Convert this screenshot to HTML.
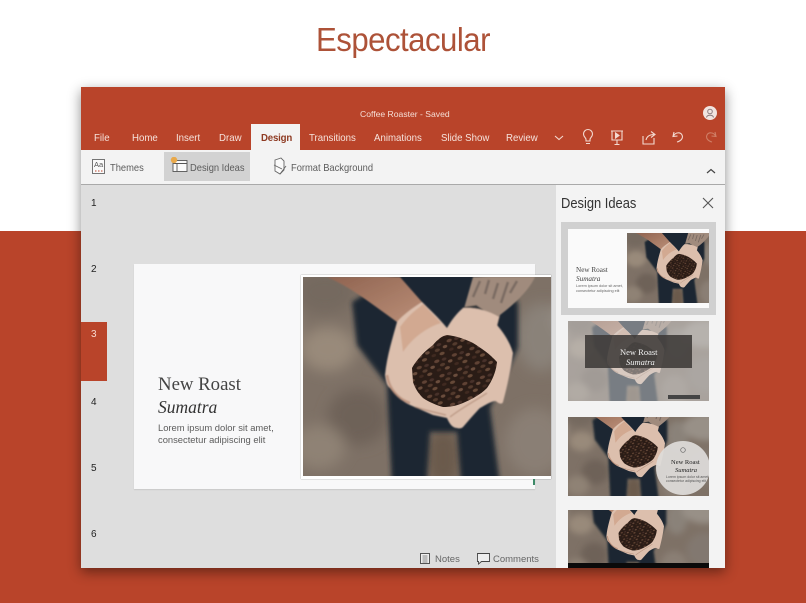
<!DOCTYPE html>
<html><head><meta charset="utf-8">
<style>
*{margin:0;padding:0;box-sizing:border-box}
html,body{width:806px;height:603px;overflow:hidden;background:#fff}
body{position:relative;font-family:"Liberation Sans",sans-serif}
.a{position:absolute;white-space:nowrap}
.sx{transform:scaleX(.89);transform-origin:left center}
.tab{position:absolute;top:131.500px;font-size:10.500px;color:#f6e3dc;line-height:13px;white-space:nowrap;transform:scaleX(.92);transform-origin:left center}
.tb{position:absolute;top:161.500px;font-size:10.500px;color:#5c5c5c;line-height:13px;white-space:nowrap;transform:scaleX(.89);transform-origin:left center}
.n{position:absolute;left:91px;font-size:10px;color:#222;line-height:12px}
svg{position:absolute;overflow:hidden}
.serif{font-family:"Liberation Serif",serif}
</style></head><body>
<div class="a" style="left:0;top:231px;width:806px;height:372px;background:#b9442a"></div>
<div class="a" style="left:316px;top:21px;font-size:33.500px;line-height:40px;color:#ad5238;letter-spacing:-.55px;transform:scaleX(.93);transform-origin:left center">Espectacular</div>

<div class="a" style="left:81px;top:87px;width:644px;height:481px;background:#dedede;box-shadow:0 4px 12px rgba(0,0,0,.45)"></div>
<div class="a" style="left:81px;top:87px;width:644px;height:63px;background:#b9442a"></div>
<div class="a" style="left:360px;top:108px;font-size:8.600px;line-height:12px;color:#f5ddd5">Coffee Roaster - Saved</div>
<div class="a" style="left:251px;top:124px;width:49px;height:27px;background:#f3f3f3"></div>
<div class="tab" style="left:94px">File</div>
<div class="tab" style="left:132px">Home</div>
<div class="tab" style="left:176px">Insert</div>
<div class="tab" style="left:219px">Draw</div>
<div class="tab" style="left:261px;color:#8e3a22;font-weight:bold;letter-spacing:-.2px">Design</div>
<div class="tab" style="left:309px">Transitions</div>
<div class="tab" style="left:374px">Animations</div>
<div class="tab" style="left:441px">Slide Show</div>
<div class="tab" style="left:506px">Review</div>

<svg style="left:550px;top:125px" width="170" height="24" viewBox="0 0 170 24" fill="none" stroke="#f3d9d0" stroke-width="1.100">
<path d="M5 11l4 3.500 4-3.500"/>
<path d="M36 16v-1.500c0-2-2.500-2.500-2.500-5.500a4.500 4.500 0 0 1 9 0c0 3-2.500 3.500-2.500 5.500V16zM36 18.500h4"/>
<path d="M61 6h12M62 6v9h10V6M67 15v4M64.500 19.500h5"/><path d="M65.500 8l3.500 2.500-3.500 2.500z" fill="#f3d9d0"/>
<path d="M93 11v8h11v-6M96 15c1-4 4-5.500 8-5.500M101 6.500l4 3-4 3"/>
<path d="M124 7l-1 4.500 4.500-.5M123.500 11c2-4 7-4 8.500-1 1.500 3-1 6-5 7"/>
<path d="M165 7l1 4.500-4.500-.5M165.500 11c-2-4-7-4-8.500-1-1.500 3 1 6 5 7" stroke="#cf7e66"/>
</svg>
<svg style="left:702px;top:105px" width="16" height="16" viewBox="0 0 16 16">
<circle cx="8" cy="8" r="7" fill="#f1e4e0"/><circle cx="8" cy="6.500" r="2.300" fill="none" stroke="#8d7d80"/><path d="M4.500 12.500c.5-3 6.500-3 7 0" fill="none" stroke="#8d7d80"/>
</svg>

<div class="a" style="left:81px;top:150px;width:644px;height:35px;background:#f3f3f3;border-bottom:1px solid #a9a9a9"></div>
<div class="a" style="left:164px;top:152px;width:86px;height:29px;background:#d2d2d2"></div>
<svg style="left:90px;top:157px" width="300" height="20" viewBox="0 0 300 20" fill="none" stroke="#666" stroke-width=".9">
<rect x="2.500" y="2.500" width="12" height="14" fill="#fafafa"/>
<text x="4" y="10" font-size="7.500" fill="#555" stroke="none" font-family="Liberation Sans">Aa</text>
<path d="M5 14h1.500M8 14h1.500M11 14h1.500" stroke="#b9442a"/>
<rect x="83" y="3.500" width="14" height="11" fill="#fafafa" stroke="#555"/><path d="M83 6.500h14M87 6.500v8" stroke="#555"/>
<circle cx="84" cy="3" r="3.200" fill="#e9a94b" stroke="none"/>
<path d="M185 3l6-2 3 3v9l-4 4-5-3z" fill="#fafafa"/><path d="M184 8l8 4M190 17l6-8"/>
</svg>
<div class="tb" style="left:110px">Themes</div>
<div class="tb" style="left:190px">Design Ideas</div>
<div class="tb" style="left:291px">Format Background</div>
<svg style="left:705px;top:167px" width="12" height="8" viewBox="0 0 12 8" fill="none" stroke="#444" stroke-width="1.200"><path d="M2 6l4-3.500L10 6"/></svg>

<div class="a" style="left:81px;top:322px;width:26px;height:59px;background:#b9442a"></div>
<div class="n" style="top:197.500px">1</div>
<div class="n" style="top:263.500px">2</div>
<div class="n" style="top:329px;color:#f8d9cf">3</div>
<div class="n" style="top:396.500px">4</div>
<div class="n" style="top:462.500px">5</div>
<div class="n" style="top:528.500px">6</div>

<div class="a" style="left:134px;top:264px;width:401px;height:225px;background:#f8f8f9;box-shadow:0 1px 1px rgba(0,0,0,.1)"></div>
<div class="a serif" style="left:158px;top:373.500px;font-size:18.800px;line-height:22px;color:#444">New Roast</div>
<div class="a serif" style="left:158px;top:396px;font-size:17.500px;line-height:22px;color:#333;font-style:italic">Sumatra</div>
<div class="a" style="left:158px;top:422px;font-size:9.400px;line-height:11.500px;color:#5c5c5c">Lorem ipsum dolor sit amet,<br>consectetur adipiscing elit</div>
<div class="a" style="left:301px;top:275px;width:250px;height:204px;background:#fff;box-shadow:0 0 1px rgba(0,0,0,.5)"></div>
<div class="a" style="left:533px;top:479px;width:2px;height:6px;background:#3d8a68"></div>

<svg style="left:303px;top:277px" width="248" height="199" viewBox="0 0 248 199">
<defs>
<filter id="b1" x="-20%" y="-20%" width="140%" height="140%"><feGaussianBlur stdDeviation="7"/></filter>
<filter id="b2" x="-5%" y="-5%" width="110%" height="110%"><feGaussianBlur stdDeviation="2.500"/></filter>
<filter id="b3" x="-5%" y="-5%" width="110%" height="110%"><feGaussianBlur stdDeviation=".8"/></filter>
<filter id="b4" x="-5%" y="-5%" width="110%" height="110%"><feGaussianBlur stdDeviation=".3"/></filter>
<linearGradient id="arm" x1="0" y1="0" x2="1" y2="1"><stop offset="0" stop-color="#8f6350"/><stop offset="1" stop-color="#c79b83"/></linearGradient>
<pattern id="bn" width="22" height="18" patternUnits="userSpaceOnUse" patternTransform="rotate(-20) scale(.85)">
<rect width="22" height="18" fill="#2a1a13"/>
<ellipse cx="4" cy="3" rx="3.200" ry="1.900" fill="#5f4334"/>
<ellipse cx="13" cy="3.500" rx="3" ry="1.700" fill="#47302a"/>
<ellipse cx="19" cy="8" rx="2.800" ry="1.800" fill="#6b4e3e"/>
<ellipse cx="9" cy="9" rx="3.200" ry="1.900" fill="#533a2d"/>
<ellipse cx="3" cy="13.500" rx="2.800" ry="1.700" fill="#3f2a20"/>
<ellipse cx="13" cy="14.500" rx="3.200" ry="1.900" fill="#654837"/>
</pattern>
<g id="photo">
<rect x="-140" y="-60" width="560" height="340" fill="#7e7166"/>
<g filter="url(#b1)">
<ellipse cx="25" cy="72" rx="28" ry="22" fill="#998a7a"/>
<ellipse cx="-45" cy="50" rx="40" ry="30" fill="#9a8e82"/>
<ellipse cx="22" cy="15" rx="30" ry="22" fill="#74695f"/>
<ellipse cx="55" cy="140" rx="30" ry="28" fill="#6e6258"/>
<ellipse cx="16" cy="170" rx="26" ry="22" fill="#8f8275"/>
<ellipse cx="232" cy="165" rx="30" ry="34" fill="#8a7f75"/>
<ellipse cx="238" cy="60" rx="24" ry="34" fill="#8a8279"/>
<ellipse cx="300" cy="40" rx="50" ry="30" fill="#989087"/>
<ellipse cx="300" cy="130" rx="40" ry="40" fill="#82786f"/>
<ellipse cx="140" cy="180" rx="18" ry="30" fill="#6a5a4c"/>
</g>
<g filter="url(#b2)">
<path d="M97 -5H170L215 25V71L187 131 200 230H160L154 155 127 155 122 230H90L84 108 54 68 49 25Z" fill="#1a2730"/>
</g>
<g filter="url(#b3)">
<path d="M24 0H97L119 25 144 52 94 60 94 45C70 28 48 10 24 0Z" fill="url(#arm)"/>
<path d="M170 0H232C225 15 210 28 197 38L194 50 160 35Z" fill="#a08b7d"/>
<path d="M177 4L170 20M186 3L182 17M195 6L190 22M205 5L198 26M214 4L207 16" stroke="#5f5550" stroke-width="2.500" fill="none" opacity=".6"/>
<path d="M160 32L173 30 190 42" stroke="#35393b" stroke-width="3.500" fill="none"/>
<path d="M94 45C90 60 84 78 82 98 83 105 84 109 87 111 95 120 100 125 107 128L130 138 144 141C147 148 150 151 154 151 157 152 159 151 160 150 167 142 172 136 177 131 184 127 192 122 194 125 198 128 200 126 200 125 204 110 208 92 210 76 207 65 200 55 194 48L196 40C185 33 170 30 160 31 153 37 148 44 144 51 135 40 126 32 119 25 108 32 100 38 94 45Z" fill="#dcbfad"/>
<path d="M97 50C108 35 115 32 120 27L138 46C125 50 110 60 100 75Z" fill="#d2a991"/>
<path d="M84 98C86 112 95 122 107 126" stroke="#b2846d" stroke-width="2.500" fill="none" opacity=".7"/>
<path d="M112 130C125 134 135 136 143 138M147 140C160 130 172 124 184 116" stroke="#a77f6a" stroke-width="1.200" fill="none" opacity=".7"/>
</g>
<path filter="url(#b4)" d="M109 91C114 82 122 74 130 68 135 62 139 59 144 58 153 59 162 62 170 66 178 71 187 77 194 85 193 95 189 104 184 111 177 118 169 122 160 126 153 129 147 130 140 130 133 128 126 125 120 121 115 116 112 111 110 105Z" fill="url(#bn)"/>
</g>
</defs>
<use href="#photo"/>
</svg>

<div class="a" style="left:556px;top:185px;width:169px;height:383px;background:#f3f3f3"></div>
<div class="a sx" style="left:561px;top:195px;font-size:14.500px;line-height:18px;color:#333">Design Ideas</div>
<svg style="left:701px;top:196px" width="14" height="14" viewBox="0 0 14 14" fill="none" stroke="#555" stroke-width="1.100"><path d="M2 2l10 10M12 2L2 12"/></svg>

<div class="a" style="left:561px;top:222px;width:155px;height:93px;background:#d0d0d0"></div>
<div class="a" style="left:568px;top:229px;width:141px;height:79px;background:#fafafa"></div>
<svg style="left:627px;top:233px" width="82" height="70" viewBox="0 0 82 70"><use href="#photo" transform="scale(.36)"/></svg>
<div class="a serif" style="left:576px;top:266px;font-size:7.200px;line-height:9px;color:#444">New Roast</div>
<div class="a serif" style="left:576px;top:275px;font-size:7.200px;line-height:9px;color:#444;font-style:italic">Sumatra</div>
<div class="a" style="left:576px;top:284px;font-size:3.800px;line-height:4.500px;color:#666">Lorem ipsum dolor sit amet,<br>consectetur adipiscing elit</div>

<svg style="left:568px;top:321px" width="141" height="80" viewBox="0 0 141 80"><use href="#photo" transform="translate(2 -5) scale(.45)"/><rect width="141" height="80" fill="#d4d4d4" opacity=".5"/><rect x="17" y="14" width="107" height="33" fill="#3e3a38" opacity=".88"/><rect x="100" y="74" width="32" height="4" fill="#444"/></svg>
<div class="a serif" style="left:620px;top:347px;font-size:8.500px;line-height:10px;color:#f3f3f3">New Roast</div>
<div class="a serif" style="left:626px;top:357px;font-size:8.500px;line-height:10px;color:#f3f3f3;font-style:italic">Sumatra</div>

<svg style="left:568px;top:417px" width="141" height="79" viewBox="0 0 141 79"><use href="#photo" transform="translate(2.500 -8) scale(.45)"/><circle cx="115" cy="51" r="27" fill="#dedcd9" opacity=".93"/><circle cx="115" cy="33" r="2.300" fill="none" stroke="#666" stroke-width=".7"/></svg>
<div class="a serif" style="left:671px;top:459px;font-size:6.500px;line-height:8px;color:#222">New Roast</div>
<div class="a serif" style="left:675px;top:466.500px;font-size:6.500px;line-height:8px;color:#222;font-style:italic">Sumatra</div>
<div class="a" style="left:666px;top:475px;font-size:3.500px;line-height:4px;color:#555">Lorem ipsum dolor sit amet,<br>consectetur adipiscing elit</div>

<svg style="left:568px;top:510px" width="141" height="58" viewBox="0 0 141 58"><use href="#photo" transform="translate(1.500 -18) scale(.45)"/><rect y="53" width="141" height="5" fill="#0a0a0a"/></svg>

<svg style="left:418px;top:551px" width="75" height="15" viewBox="0 0 75 15" fill="none" stroke="#444" stroke-width=".9">
<rect x="2.500" y="2.500" width="9" height="10" fill="#eee"/><path d="M4.500 5h5M4.500 7h5M4.500 9h5M4.500 11h5" stroke="#888"/>
<path d="M59.500 2.500h12v8h-8l-3 2.500v-2.500h-1z" fill="#eee"/>
</svg>
<div class="a" style="left:435px;top:552.500px;font-size:9.500px;line-height:13px;color:#666">Notes</div>
<div class="a" style="left:493px;top:552.500px;font-size:9.500px;line-height:13px;color:#666">Comments</div>
</body></html>
